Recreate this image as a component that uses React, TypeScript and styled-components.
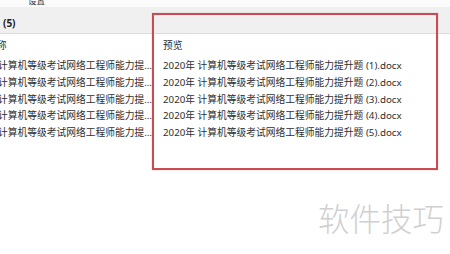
import React from "react";
import styled, { createGlobalStyle } from "styled-components";

const Global = createGlobalStyle`
  html, body { margin: 0; padding: 0; background: #ffffff; }
  body {
    font-family: "Noto Sans", "Noto Sans CJK SC", sans-serif;
    color: #2e2e2e;
  }
`;

const Page = styled.div`
  position: relative;
  width: 450px;
  height: 254px;
  overflow: hidden;
  background: #ffffff;
  font-size: 9.75px;
`;

const TopStrip = styled.div`
  height: 7px;
  overflow: hidden;
  background: #fbfbfb;
  display: flex;
  align-items: flex-end;
  padding-left: 28px;
`;

const MenuLabel = styled.span`
  font-size: 8.5px;
  line-height: 10px;
  margin-bottom: 1px;
  color: #333;
`;

const GroupHeader = styled.div`
  height: 27px;
  box-sizing: border-box;
  background: #f0f0f0;
  border-bottom: 1px solid #dcdcdc;
  display: flex;
  align-items: center;
  padding: 6px 0 0 3px;
`;

const Count = styled.span`
  font-weight: 700;
  font-size: 10px;
  color: #222;
`;

const Table = styled.div`
  display: grid;
  grid-template-columns: 169px 1fr;
  margin-left: -16px;
`;

const HeaderCell = styled.div<{ $indent: number }>`
  height: 24px;
  display: flex;
  align-items: center;
  padding-left: ${(p) => p.$indent}px;
  padding-bottom: 2px;
  box-sizing: border-box;
  white-space: nowrap;
`;

const Cell = styled.div<{ $indent: number }>`
  height: 16.75px;
  line-height: 16.75px;
  padding-left: ${(p) => p.$indent}px;
  white-space: nowrap;
  overflow: hidden;
  text-overflow: ellipsis;
`;

const Highlight = styled.div`
  position: absolute;
  left: 152px;
  top: 13px;
  width: 286px;
  height: 157px;
  box-sizing: border-box;
  border: 2px solid #cc4a51;
  box-shadow: 0 0 1px rgba(204, 74, 81, 0.5);
  pointer-events: none;
`;

const Watermark = styled.div`
  position: absolute;
  left: 318px;
  top: 198px;
  font-size: 31.5px;
  font-weight: 300;
  color: #d0d0d0;
  line-height: 38px;
  font-family: "Noto Sans CJK SC", sans-serif;
`;

const base = "计算机等级考试网络工程师能力提升题";
const files = [1, 2, 3, 4, 5].map((n) => ({
  name: `${base} (${n}).docx`,
  preview: `2020年 ${base} (${n}).docx`,
}));

export default function App() {
  return (
    <Page>
      <Global />
      <TopStrip>
        <MenuLabel>设置</MenuLabel>
      </TopStrip>
      <GroupHeader>
        <Count>(5)</Count>
      </GroupHeader>
      <Table>
        <HeaderCell $indent={3}>名称</HeaderCell>
        <HeaderCell $indent={10}>预览</HeaderCell>
        {files.map((f) => (
          <React.Fragment key={f.preview}>
            <Cell $indent={14}>{f.name}</Cell>
            <Cell $indent={10}>{f.preview}</Cell>
          </React.Fragment>
        ))}
      </Table>
      <Highlight />
      <Watermark>软件技巧</Watermark>
    </Page>
  );
}
